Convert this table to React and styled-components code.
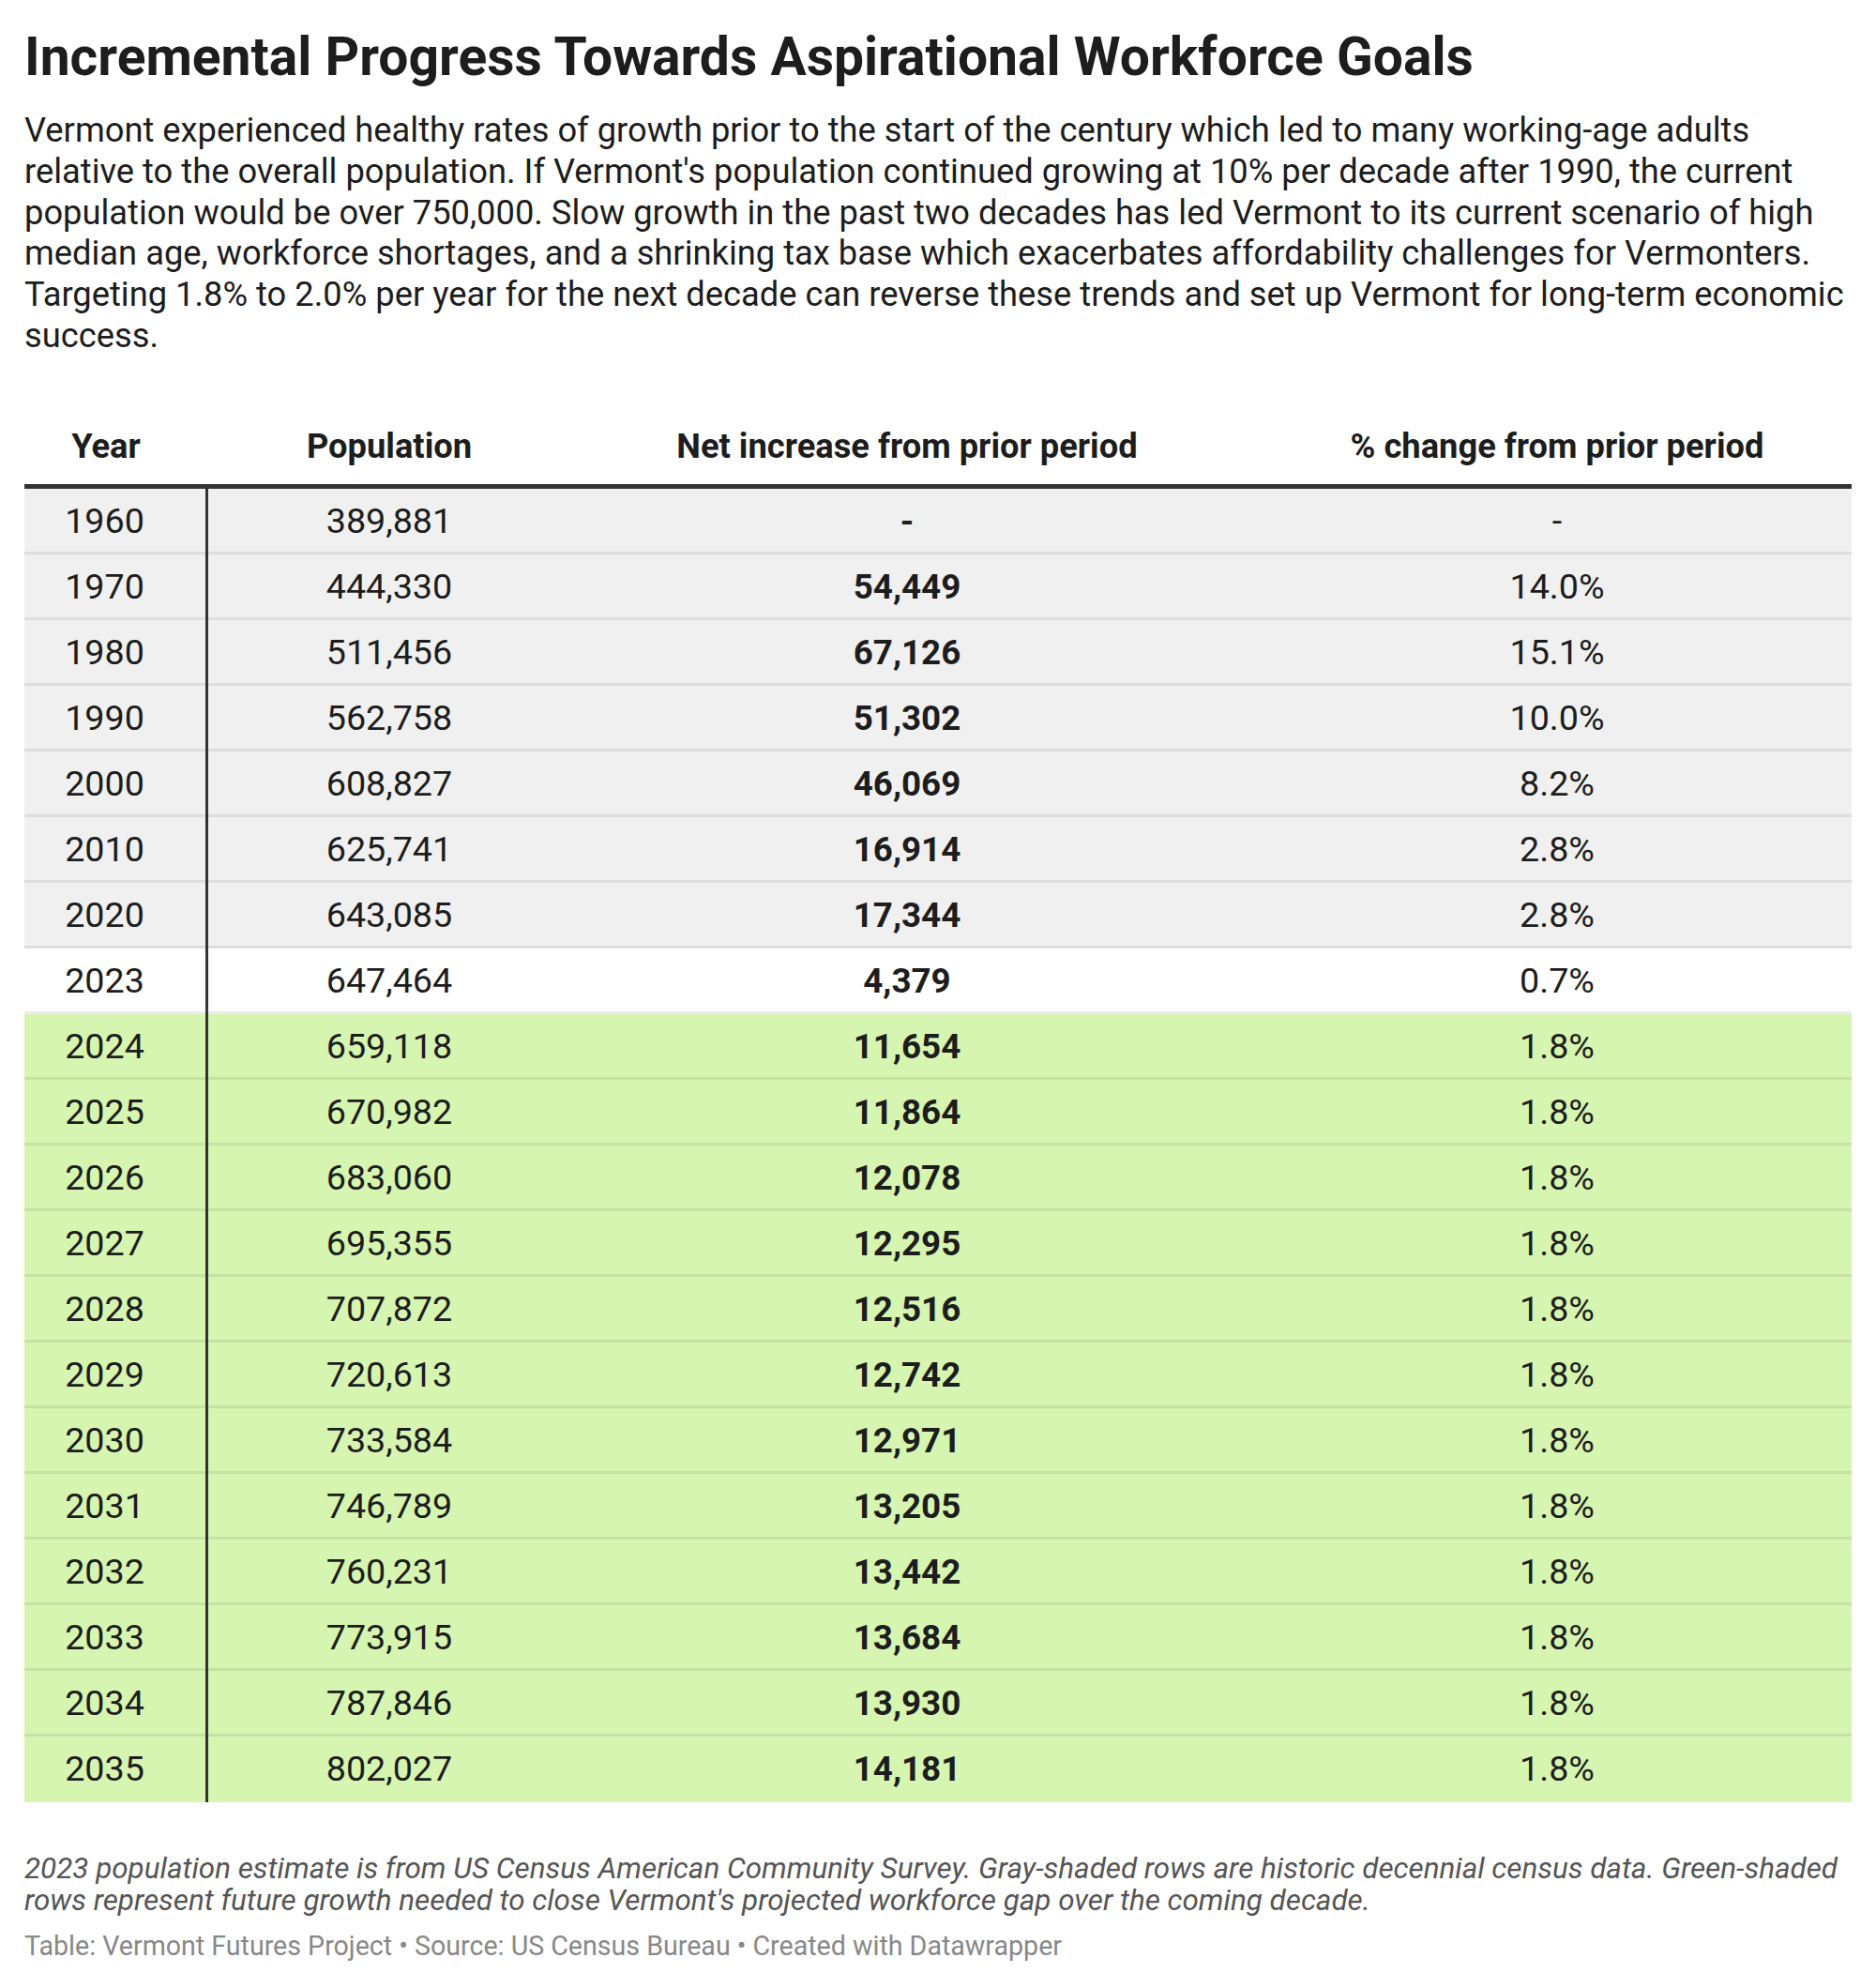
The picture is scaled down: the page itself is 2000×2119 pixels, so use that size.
import React from "react";
import styled, { createGlobalStyle } from "styled-components";

const Global = createGlobalStyle`
  html, body { margin: 0; padding: 0; background: #fff; }
  body { font-family: Roboto, "Liberation Sans", sans-serif; color: #1d1d1d; }
`;

const Page = styled.div`
  padding: 28px 26px 30px 26px;
  width: 1948px;
`;

const Title = styled.h1`
  margin: 0;
  font-size: 57px;
  line-height: 66px;
  font-weight: 700;
  color: #1d1d1d;
`;

const Description = styled.p`
  margin: 23px 0 0 0;
  font-size: 36.3px;
  line-height: 43.8px;
  font-weight: 400;
  color: #1d1d1d;
`;

const Table = styled.div`
  margin-top: 75px;
  display: flex;
  flex-direction: column;
`;

const cols = "196px 386px 718px 648px";

const HeaderRow = styled.div`
  display: grid;
  grid-template-columns: ${cols};
  border-bottom: 5px solid #333;
  padding-bottom: 19px;
`;

const HeadCell = styled.div`
  font-size: 36.3px;
  line-height: 42px;
  font-weight: 700;
  text-align: center;
  padding-right: ${(p) => (p.$first ? "22px" : "0")};
  padding-left: ${(p) => (p.$last ? "20px" : "0")};
`;

const Row = styled.div`
  display: grid;
  grid-template-columns: ${cols};
  height: 70px;
  background: ${(p) => p.$bg};
  box-shadow: ${(p) => (p.$lastRow ? "none" : "inset 0 -3px 0 rgba(0,0,0,0.08)")};
`;

const Cell = styled.div`
  font-size: ${(p) => (p.$bold ? "36.8px" : "37.7px")};
  line-height: 67px;
  padding-top: 1px;
  text-align: center;
  font-weight: ${(p) => (p.$bold ? 700 : 400)};
  color: #1d1d1d;
  padding-left: ${(p) => (p.$last ? "20px" : "0")};
`;

const YearCell = styled(Cell)`
  padding-right: 22px;
  border-right: 3px solid #333;
`;

const Notes = styled.p`
  margin: 54px 0 0 0;
  font-size: 31.4px;
  line-height: 34px;
  font-style: italic;
  color: #555;
`;

const Source = styled.p`
  margin: 14px 0 0 0;
  font-size: 28.6px;
  line-height: 34px;
  color: #888;
`;

const data = [
  ["1960", "389,881", "-", "-", "g"],
  ["1970", "444,330", "54,449", "14.0%", "g"],
  ["1980", "511,456", "67,126", "15.1%", "g"],
  ["1990", "562,758", "51,302", "10.0%", "g"],
  ["2000", "608,827", "46,069", "8.2%", "g"],
  ["2010", "625,741", "16,914", "2.8%", "g"],
  ["2020", "643,085", "17,344", "2.8%", "g"],
  ["2023", "647,464", "4,379", "0.7%", "w"],
  ["2024", "659,118", "11,654", "1.8%", "n"],
  ["2025", "670,982", "11,864", "1.8%", "n"],
  ["2026", "683,060", "12,078", "1.8%", "n"],
  ["2027", "695,355", "12,295", "1.8%", "n"],
  ["2028", "707,872", "12,516", "1.8%", "n"],
  ["2029", "720,613", "12,742", "1.8%", "n"],
  ["2030", "733,584", "12,971", "1.8%", "n"],
  ["2031", "746,789", "13,205", "1.8%", "n"],
  ["2032", "760,231", "13,442", "1.8%", "n"],
  ["2033", "773,915", "13,684", "1.8%", "n"],
  ["2034", "787,846", "13,930", "1.8%", "n"],
  ["2035", "802,027", "14,181", "1.8%", "n"],
];

const bgs = { g: "#f0f0f0", w: "#ffffff", n: "#d6f5b1" };

export default function App() {
  return (
    <Page>
      <Global />
      <Title>Incremental Progress Towards Aspirational Workforce Goals</Title>
      <Description>
        Vermont experienced healthy rates of growth prior to the start of the century which led to many working-age adults
        relative to the overall population. If Vermont's population continued growing at 10% per decade after 1990, the current
        population would be over 750,000. Slow growth in the past two decades has led Vermont to its current scenario of high
        median age, workforce shortages, and a shrinking tax base which exacerbates affordability challenges for Vermonters.
        Targeting 1.8% to 2.0% per year for the next decade can reverse these trends and set up Vermont for long-term economic
        success.
      </Description>
      <Table>
        <HeaderRow>
          <HeadCell $first>Year</HeadCell>
          <HeadCell>Population</HeadCell>
          <HeadCell>Net increase from prior period</HeadCell>
          <HeadCell $last>% change from prior period</HeadCell>
        </HeaderRow>
        {data.map((r, i) => (
          <Row key={r[0]} $bg={bgs[r[4]]} $lastRow={i === data.length - 1}>
            <YearCell>{r[0]}</YearCell>
            <Cell>{r[1]}</Cell>
            <Cell $bold>{r[2]}</Cell>
            <Cell $last>{r[3]}</Cell>
          </Row>
        ))}
      </Table>
      <Notes>
        2023 population estimate is from US Census American Community Survey. Gray-shaded rows are historic decennial census data. Green-shaded
        rows represent future growth needed to close Vermont's projected workforce gap over the coming decade.
      </Notes>
      <Source>Table: Vermont Futures Project • Source: US Census Bureau • Created with Datawrapper</Source>
    </Page>
  );
}
